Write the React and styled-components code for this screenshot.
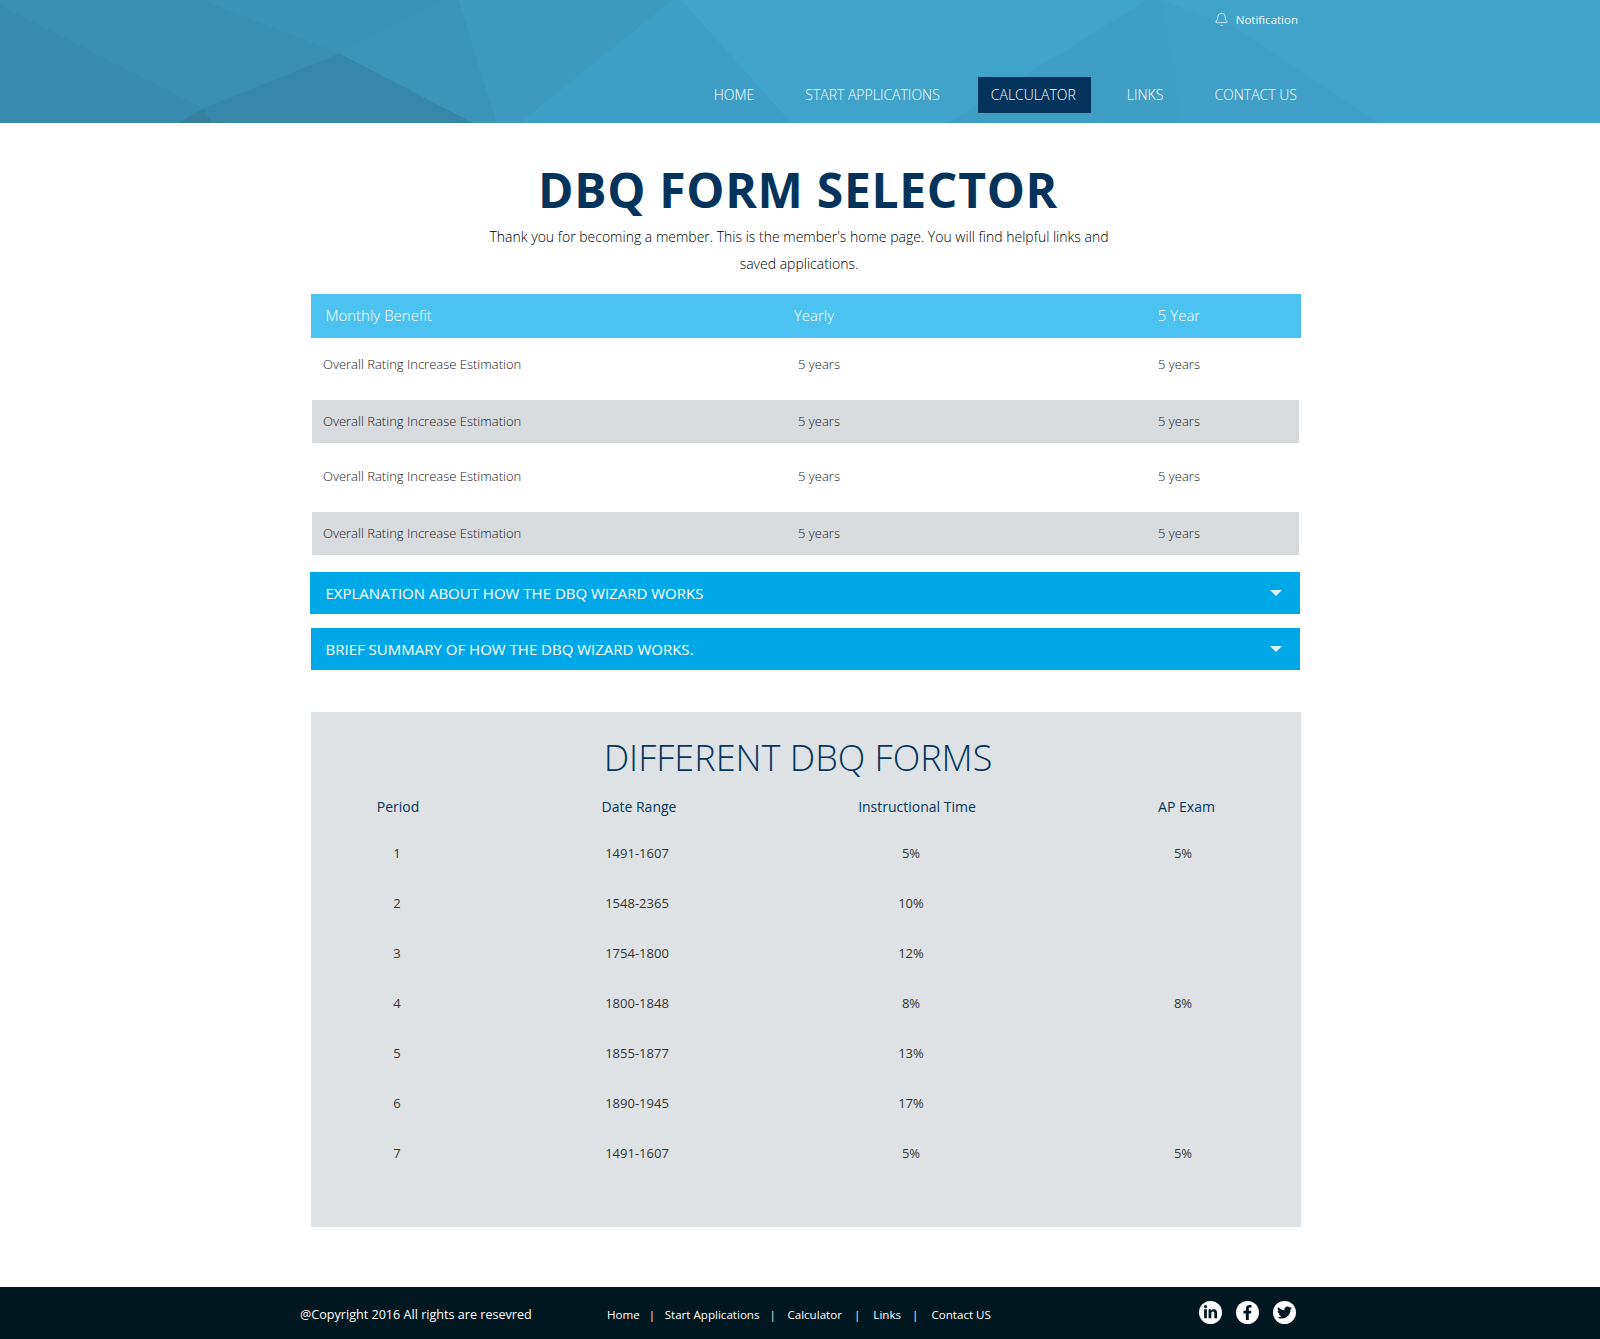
import React from 'react'
import styled, { createGlobalStyle } from 'styled-components'
import { Bell } from 'lucide-react'
import { FaLinkedinIn, FaFacebookF, FaTwitter } from 'react-icons/fa'

const GlobalStyle = createGlobalStyle`
  html, body { margin: 0; padding: 0; background: #fff; }
  body { font-family: "Open Sans", "Liberation Sans", sans-serif; }
  * { box-sizing: border-box; }
`

const Header = styled.header`
  position: relative;
  height: 123px;
  background: #40a3ca;
  overflow: hidden;
  padding-right: 288px;
  display: flex;
  flex-direction: column;
  align-items: flex-end;
`

const HeaderArt = styled.svg`
  position: absolute;
  inset: 0;
  width: 1600px;
  height: 123px;
`

const Notify = styled.div`
  position: relative;
  display: flex;
  align-items: center;
  gap: 7px;
  height: 38px;
  margin-right: 14px;
  color: #f1fafd;
  font-size: 11.5px;
  font-weight: 400;
`

const Nav = styled.nav`
  position: relative;
  display: flex;
  gap: 23px;
  margin-top: 39px;
`

const NavItem = styled.a`
  display: block;
  height: 36px;
  line-height: 36px;
  padding: 0 15px 0 13px;
  color: #fff;
  font-size: 14px;
  font-weight: 300;
  background: ${p => (p.$active ? '#03335a' : 'transparent')};
`

const Hero = styled.section`
  padding: 35px 4px 0 0;
  text-align: center;
`

const Title = styled.h1`
  margin: 0;
  color: #04345c;
  font-size: 48px;
  line-height: 64px;
  font-weight: 700;
  letter-spacing: 0.7px;
`

const Intro = styled.p`
  width: 640px;
  margin: 1px auto 0;
  padding-left: 2px;
  color: #000;
  font-size: 14px;
  line-height: 27px;
  font-weight: 300;
`

const Main = styled.main`
  width: 990px;
  margin: 17px 0 0 311px;
`

const TableHead = styled.div`
  display: grid;
  grid-template-columns: 260px 486px 244px;
  height: 44px;
  padding-bottom: 2px;
  align-items: center;
  background: #4bc2ef;
  color: #fff;
  font-size: 15px;
  font-weight: 300;
  span { text-align: center; }
  span:first-child { text-align: left; padding-left: 14.5px; }
`

const BenefitRow = styled.div`
  display: grid;
  grid-template-columns: 267px 480px 240px;
  width: 987px;
  margin-left: 1px;
  height: ${p => p.$height}px;
  padding-bottom: ${p => p.$shift}px;
  align-items: center;
  background: ${p => (p.$shaded ? '#d8dbde' : 'transparent')};
  color: #1a1a1a;
  font-size: 13px;
  font-weight: 300;
  span { text-align: center; }
  span:first-child { text-align: left; padding-left: 11px; }
`

const Accordion = styled.div`
  display: flex;
  align-items: center;
  justify-content: space-between;
  width: ${p => p.$width}px;
  height: 42px;
  margin-top: ${p => p.$top}px;
  margin-left: ${p => p.$left}px;
  padding: 0 18px 0 ${p => p.$pad}px;
  background: #00a8e8;
  color: #fff;
  font-size: 15px;
  font-weight: ${p => p.$weight};
`

const Arrow = styled.i`
  width: 0;
  height: 0;
  border-left: 6px solid transparent;
  border-right: 6px solid transparent;
  border-top: 6px solid #dff6fe;
`

const Panel = styled.section`
  margin-top: 42px;
  height: 515px;
  padding-top: 23px;
  background: #dfe2e4;
`

const PanelTitle = styled.h2`
  margin: 0;
  padding-right: 16px;
  text-align: center;
  color: #04345c;
  font-size: 36px;
  line-height: 45px;
  font-weight: 350;
`

const FormsGrid = styled.div`
  display: grid;
  grid-template-columns: ${p => p.$columns};
  height: ${p => p.$height}px;
  padding-top: ${p => p.$top}px;
  align-items: center;
  text-align: center;
  color: ${p => p.$color};
  font-size: ${p => p.$size}px;
  span:last-child { padding-left: ${p => p.$lastPad}px; }
`

const Footer = styled.footer`
  display: flex;
  align-items: center;
  height: 52px;
  margin-top: 60px;
  padding-left: 300px;
  background: #021820;
  color: #fff;
  font-size: 12.6px;
`

const Copyright = styled.span`
  width: 307px;
  padding-top: 2px;
`

const FooterLinks = styled.div`
  display: flex;
  width: 592px;
  padding-top: 2px;
  font-size: 11.6px;
  a { color: #fff; }
`

const FooterSep = styled.i`
  font-style: normal;
  margin: 0 ${p => p.$right}px 0 ${p => p.$left}px;
  color: #eee;
`

const Socials = styled.div`
  display: flex;
  gap: 14px;
  padding-bottom: 2px;
`

const Social = styled.span`
  display: flex;
  align-items: center;
  justify-content: center;
  width: 23px;
  height: 23px;
  border-radius: 50%;
  background: #fff;
  color: #021820;
  font-size: 15px;
`

const navItems = ['HOME', 'START APPLICATIONS', 'CALCULATOR', 'LINKS', 'CONTACT US']
const benefitRows = [
  { height: 62, shift: 11 },
  { height: 43, shift: 2, shaded: true },
  { height: 69, shift: 4 },
  { height: 43, shift: 2, shaded: true },
]
const forms = [
  ['1', '1491-1607', '5%', '5%'],
  ['2', '1548-2365', '10%', ''],
  ['3', '1754-1800', '12%', ''],
  ['4', '1800-1848', '8%', '8%'],
  ['5', '1855-1877', '13%', ''],
  ['6', '1890-1945', '17%', ''],
  ['7', '1491-1607', '5%', '5%'],
]
const footerLinks = [
  { label: 'Home' },
  { label: 'Start Applications', left: 9, right: 9.5 },
  { label: 'Calculator', left: 10, right: 11.5 },
  { label: 'Links', left: 12, right: 13 },
  { label: 'Contact US', left: 11, right: 13 },
]

const App = () => (
  <>
    <GlobalStyle />
    <Header>
      <HeaderArt viewBox="0 0 1600 123" aria-hidden="true">
        <polygon points="0,0 444,0 339,53 204,0" fill="#3c92b7" />
        <polygon points="0,0 204,0 339,53 204,108 94,52 0,5" fill="#3a8fb3" />
        <polygon points="0,5 94,52 204,108 178,123 0,123" fill="#398cb0" />
        <polygon points="339,53 474,123 212,123 204,108" fill="#3887aa" />
        <polygon points="178,123 204,108 212,123" fill="#367f9f" />
        <polygon points="444,0 459,0 497,123 474,123 339,53" fill="#3d94b9" />
        <polygon points="459,0 673,0 520,123 497,123" fill="#3f99bf" />
        <polygon points="673,0 520,123 791,123 681,0" fill="#3f9ec5" />
        <polygon points="1147,0 1162,0 1183,123 948,123" fill="#3f9ec4" />
        <polygon points="1162,0 1183,123 1379,123 1240,30" fill="#3f9fc6" />
        <polygon points="0,5 94,52 40,52 8,84 0,84" fill="#398caf" />
      </HeaderArt>
      <Notify>
        <Bell size={15} strokeWidth={1.2} />
        Notification
      </Notify>
      <Nav>
        {navItems.map(item => (
          <NavItem key={item} $active={item === 'CALCULATOR'}>{item}</NavItem>
        ))}
      </Nav>
    </Header>
    <Hero>
      <Title>DBQ FORM SELECTOR</Title>
      <Intro>
        Thank you for becoming a member. This is the member's home page. You will find helpful links and saved applications.
      </Intro>
    </Hero>
    <Main>
      <TableHead>
        <span>Monthly Benefit</span>
        <span>Yearly</span>
        <span>5 Year</span>
      </TableHead>
      {benefitRows.map((row, i) => (
        <BenefitRow key={i} $height={row.height} $shift={row.shift} $shaded={row.shaded}>
          <span>Overall Rating Increase Estimation</span>
          <span>5 years</span>
          <span>5 years</span>
        </BenefitRow>
      ))}
      <Accordion $top={17} $left={-1} $width={990} $pad={15.5} $weight={400}>
        EXPLANATION ABOUT HOW THE DBQ WIZARD WORKS
        <Arrow />
      </Accordion>
      <Accordion $top={14} $left={0} $width={989} $pad={14.5} $weight={500}>
        BRIEF SUMMARY OF HOW THE DBQ WIZARD WORKS.
        <Arrow />
      </Accordion>
      <Panel>
        <PanelTitle>DIFFERENT DBQ FORMS</PanelTitle>
        <FormsGrid $columns="174px 308px 248px 260px" $height={48} $top={4} $color="#04345c" $size={14} $lastPad={31}>
          <span>Period</span>
          <span>Date Range</span>
          <span>Instructional Time</span>
          <span>AP Exam</span>
        </FormsGrid>
        {forms.map(row => (
          <FormsGrid key={row[0]} $columns="172px 308px 240px 270px" $height={50} $top={0} $color="#333" $size={13} $lastPad={34}>
            {row.map((cell, i) => <span key={i}>{cell}</span>)}
          </FormsGrid>
        ))}
      </Panel>
    </Main>
    <Footer>
      <Copyright>@Copyright 2016 All rights are resevred</Copyright>
      <FooterLinks>
        {footerLinks.map(link => (
          <React.Fragment key={link.label}>
            {link.left && <FooterSep $left={link.left} $right={link.right}>|</FooterSep>}
            <a>{link.label}</a>
          </React.Fragment>
        ))}
      </FooterLinks>
      <Socials>
        <Social><FaLinkedinIn /></Social>
        <Social><FaFacebookF /></Social>
        <Social><FaTwitter /></Social>
      </Socials>
    </Footer>
  </>
)

export default App
